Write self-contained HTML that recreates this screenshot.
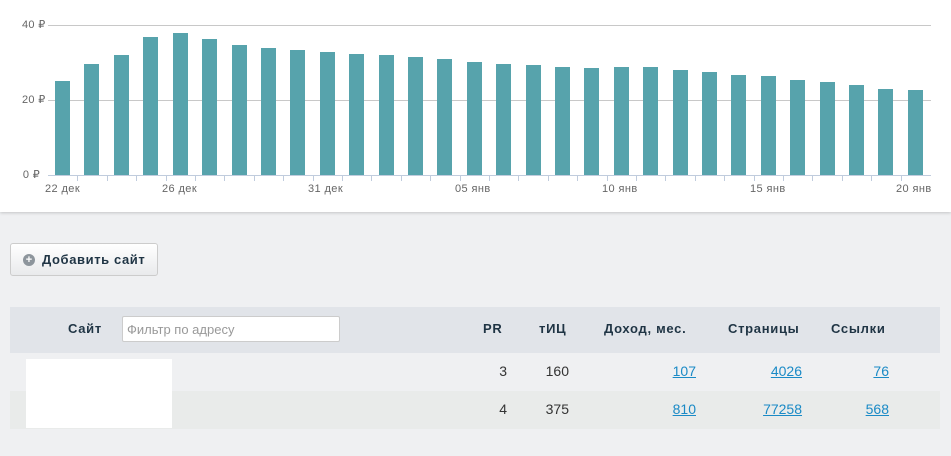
<!DOCTYPE html>
<html><head><meta charset="utf-8"><style>
body{margin:0;width:951px;height:456px;background:#eff0f2;font-family:"Liberation Sans",sans-serif;position:relative;overflow:hidden}
.a{position:absolute}
.chart{left:0;top:0;width:951px;height:212px;background:#fff;box-shadow:0 1px 3px rgba(0,0,0,.18)}
.g{height:1px;background:#c8c8c8;left:48px;width:883px}
.b{background:#57a3ac;width:15px}
.yl{font-size:11px;color:#666;left:22px;width:18px;text-align:right;white-space:nowrap;letter-spacing:0.3px}
.xl{font-size:11px;color:#666;top:183px;white-space:nowrap;letter-spacing:0.4px}
.t{width:1px;height:5px;background:#c0ccdd;top:176px}
.h{font-size:13px;font-weight:bold;color:#1f3444;top:321px;letter-spacing:0.7px}
.v{font-size:14px;color:#333;text-align:right}
.l{font-size:14px;color:#1a8ac6;text-decoration:underline;text-align:right}
</style></head><body>
<div class="a chart"></div>
<div class="a g" style="top:25px"></div>
<div class="a g" style="top:100px"></div>
<div class="a" style="left:48px;top:175px;width:883px;height:1px;background:#c0ccdd"></div>
<div class="a yl" style="top:18px">40 ₽</div>
<div class="a yl" style="top:93px">20 ₽</div>
<div class="a yl" style="top:168px">0 ₽</div>
<div class="a xl" style="left:45px">22 дек</div>
<div class="a xl" style="left:162px">26 дек</div>
<div class="a xl" style="left:308px">31 дек</div>
<div class="a xl" style="left:455px">05 янв</div>
<div class="a xl" style="left:602px">10 янв</div>
<div class="a xl" style="left:750px">15 янв</div>
<div class="a xl" style="left:896px">20 янв</div>

<div class="a" style="left:10px;top:243px;width:148px;height:33px;border:1px solid #ccc;border-radius:3px;background:linear-gradient(#fff,#e9eaec);box-sizing:border-box"></div>
<div class="a" style="left:23px;top:254px;width:12px;height:12px;border-radius:50%;background:#8d959c;color:#fff;font-size:11px;line-height:12px;text-align:center;font-weight:bold">+</div>
<div class="a" style="left:42px;top:252px;font-size:13px;font-weight:bold;color:#1f3444;letter-spacing:0.6px">Добавить сайт</div>

<div class="a" style="left:10px;top:307px;width:930px;height:46px;background:#e1e4e9"></div>
<div class="a" style="left:10px;top:391px;width:930px;height:38px;background:#e9ebea"></div>
<div class="a" style="left:26px;top:359px;width:146px;height:69px;background:#fff"></div>
<div class="a h" style="left:68px">Сайт</div>
<div class="a" style="left:122px;top:316px;width:218px;height:26px;background:#fff;border:1px solid #ccc;border-radius:2px;box-sizing:border-box;font-size:13px;color:#999;padding:5px 4px">Фильтр по адресу</div>
<div class="a h" style="left:483px">PR</div>
<div class="a h" style="left:539px">тИЦ</div>
<div class="a h" style="left:604px">Доход, мес.</div>
<div class="a h" style="left:728px">Страницы</div>
<div class="a h" style="left:831px">Ссылки</div>

<div class="a v" style="right:444px;top:363px">3</div>
<div class="a v" style="right:382px;top:363px">160</div>
<div class="a l" style="right:255px;top:363px">107</div>
<div class="a l" style="right:149px;top:363px">4026</div>
<div class="a l" style="right:62px;top:363px">76</div>
<div class="a v" style="right:444px;top:401px">4</div>
<div class="a v" style="right:382px;top:401px">375</div>
<div class="a l" style="right:255px;top:401px">810</div>
<div class="a l" style="right:149px;top:401px">77258</div>
<div class="a l" style="right:62px;top:401px">568</div>

<div class="a b" style="left:55px;top:81px;height:94px"></div>
<div class="a b" style="left:84px;top:64px;height:111px"></div>
<div class="a b" style="left:114px;top:55px;height:120px"></div>
<div class="a b" style="left:143px;top:37px;height:138px"></div>
<div class="a b" style="left:173px;top:33px;height:142px"></div>
<div class="a b" style="left:202px;top:39px;height:136px"></div>
<div class="a b" style="left:232px;top:45px;height:130px"></div>
<div class="a b" style="left:261px;top:48px;height:127px"></div>
<div class="a b" style="left:290px;top:50px;height:125px"></div>
<div class="a b" style="left:320px;top:52px;height:123px"></div>
<div class="a b" style="left:349px;top:54px;height:121px"></div>
<div class="a b" style="left:379px;top:55px;height:120px"></div>
<div class="a b" style="left:408px;top:57px;height:118px"></div>
<div class="a b" style="left:437px;top:59px;height:116px"></div>
<div class="a b" style="left:467px;top:62px;height:113px"></div>
<div class="a b" style="left:496px;top:64px;height:111px"></div>
<div class="a b" style="left:526px;top:65px;height:110px"></div>
<div class="a b" style="left:555px;top:67px;height:108px"></div>
<div class="a b" style="left:584px;top:68px;height:107px"></div>
<div class="a b" style="left:614px;top:67px;height:108px"></div>
<div class="a b" style="left:643px;top:67px;height:108px"></div>
<div class="a b" style="left:673px;top:70px;height:105px"></div>
<div class="a b" style="left:702px;top:72px;height:103px"></div>
<div class="a b" style="left:731px;top:75px;height:100px"></div>
<div class="a b" style="left:761px;top:76px;height:99px"></div>
<div class="a b" style="left:790px;top:80px;height:95px"></div>
<div class="a b" style="left:820px;top:82px;height:93px"></div>
<div class="a b" style="left:849px;top:85px;height:90px"></div>
<div class="a b" style="left:878px;top:89px;height:86px"></div>
<div class="a b" style="left:908px;top:90px;height:85px"></div>

<div class="a t" style="left:77px"></div><div class="a t" style="left:107px"></div><div class="a t" style="left:136px"></div><div class="a t" style="left:166px"></div><div class="a t" style="left:195px"></div><div class="a t" style="left:224px"></div><div class="a t" style="left:254px"></div><div class="a t" style="left:283px"></div><div class="a t" style="left:313px"></div><div class="a t" style="left:342px"></div><div class="a t" style="left:371px"></div><div class="a t" style="left:401px"></div><div class="a t" style="left:430px"></div><div class="a t" style="left:460px"></div><div class="a t" style="left:489px"></div><div class="a t" style="left:518px"></div><div class="a t" style="left:548px"></div><div class="a t" style="left:577px"></div><div class="a t" style="left:607px"></div><div class="a t" style="left:636px"></div><div class="a t" style="left:665px"></div><div class="a t" style="left:695px"></div><div class="a t" style="left:724px"></div><div class="a t" style="left:754px"></div><div class="a t" style="left:783px"></div><div class="a t" style="left:812px"></div><div class="a t" style="left:842px"></div><div class="a t" style="left:871px"></div><div class="a t" style="left:901px"></div>
</body></html>
